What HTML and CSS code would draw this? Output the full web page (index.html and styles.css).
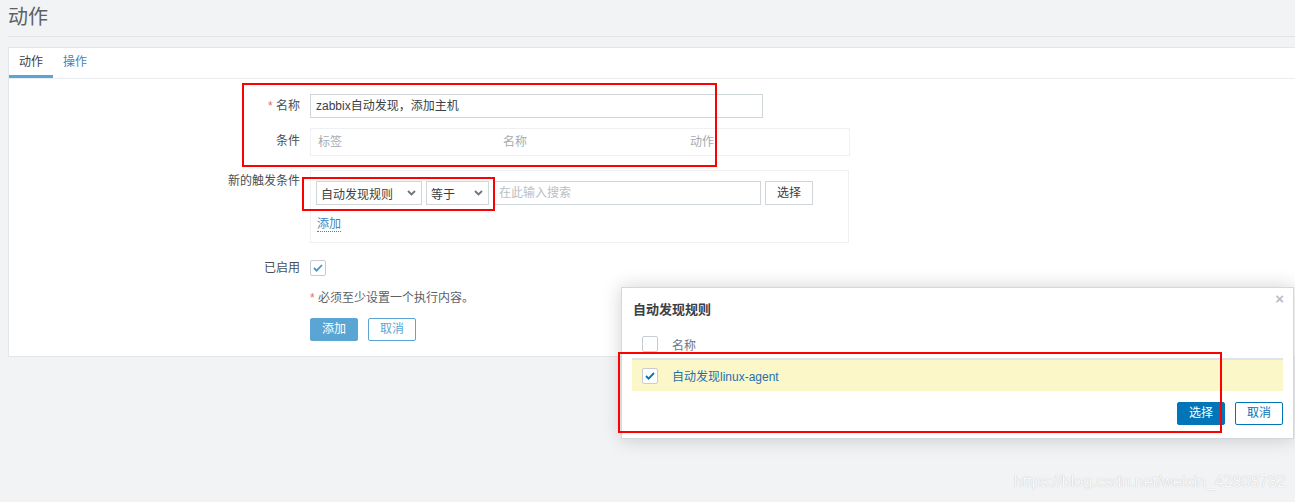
FILE: index.html
```html
<!DOCTYPE html>
<html lang="zh-CN">
<head>
  <meta charset="UTF-8">
  <title>动作</title>
  <link rel="stylesheet" href="styles.css">
</head>
<body>

  <header class="page-title">
    <h1>动作</h1>
  </header>

  <div class="card">
    <ul class="tabs">
      <li class="active">动作</li>
      <li>操作</li>
    </ul>

    <div class="form">
      <div class="row row-name">
        <div class="lbl"><span class="star">*</span> 名称</div>
        <div class="fld"><div class="text-input wide">zabbix自动发现，添加主机</div></div>
      </div>

      <div class="row row-cond">
        <div class="lbl lbl-cond">条件</div>
        <div class="fld">
          <div class="cond-table">
            <span class="col col-tag">标签</span>
            <span class="col col-name">名称</span>
            <span class="col">动作</span>
          </div>
        </div>
      </div>

      <div class="row row-new">
        <div class="lbl lbl-top">新的触发条件</div>
        <div class="fld">
          <div class="new-box">
            <div class="inline">
              <div class="select sel-type">自动发现规则
                <svg width="9" height="6" viewBox="0 0 9 6"><path d="M1 1l3.5 3.5L8 1" fill="none" stroke="#6d767c" stroke-width="1.8"/></svg>
              </div>
              <div class="select sel-op">等于
                <svg width="9" height="6" viewBox="0 0 9 6"><path d="M1 1l3.5 3.5L8 1" fill="none" stroke="#6d767c" stroke-width="1.8"/></svg>
              </div>
              <div class="text-input search">在此输入搜索</div>
              <div class="btn-grey">选择</div>
            </div>
            <a class="dotted-link">添加</a>
          </div>
        </div>
      </div>

      <div class="row row-enabled">
        <div class="lbl">已启用</div>
        <div class="fld">
          <span class="checkbox">
            <svg width="10" height="8" viewBox="0 0 10 8"><path d="M1 4l2.6 2.6L9 1" fill="none" stroke="#4796c4" stroke-width="1.8"/></svg>
          </span>
        </div>
      </div>

      <div class="row row-note">
        <div class="lbl"></div>
        <div class="fld note"><span class="star">*</span> 必须至少设置一个执行内容。</div>
      </div>

      <div class="row row-buttons">
        <div class="lbl"></div>
        <div class="fld buttons">
          <span class="btn-main">添加</span>
          <span class="btn-alt">取消</span>
        </div>
      </div>
    </div>
  </div>

  <div class="modal">
    <div class="modal-head">
      <h3>自动发现规则</h3>
      <span class="close">×</span>
    </div>
    <div class="list">
      <div class="list-head">
        <span class="checkbox"></span>
        <span class="list-title">名称</span>
      </div>
      <div class="list-row">
        <span class="checkbox">
          <svg width="10" height="8" viewBox="0 0 10 8"><path d="M1 4l2.6 2.6L9 1" fill="none" stroke="#0275b8" stroke-width="1.9"/></svg>
        </span>
        <a class="list-link">自动发现linux-agent</a>
      </div>
    </div>
    <div class="modal-foot">
      <span class="btn-select">选择</span>
      <span class="btn-cancel">取消</span>
    </div>
  </div>

  <!-- red annotation frames drawn over the screenshot -->
  <div class="mark mark-1"></div>
  <div class="mark mark-2"></div>
  <div class="mark mark-3"></div>

  <div class="watermark">https://blog.csdn.net/weixin_42808782</div>

</body>
</html>
```

FILE: styles.css
```css
body {
  margin: 0;
  background: #f2f3f5;
  font-family: "Liberation Sans", Arial, "Noto Sans CJK SC", sans-serif;
  font-size: 12px;
  color: #4a4f53;
  width: 1295px;
  height: 502px;
  overflow: hidden;
  position: relative;
}

.page-title {
  margin-left: 8px;
  height: 36px;
  border-bottom: 1px solid #e2e5e8;
}

.page-title h1 {
  margin: 0;
  font-size: 20px;
  font-weight: normal;
  line-height: 34px;
  color: #5c6165;
}

.card {
  margin: 10px 0 0 8px;
  background: #fff;
  border: 1px solid #e4e7ea;
  border-right: none;
  height: 308px;
}

.tabs {
  list-style: none;
  margin: 0;
  padding: 0;
  display: flex;
  height: 30px;
  border-bottom: 1px solid #ebeef0;
}

.tabs li {
  padding: 0 10px;
  line-height: 29px;
  color: #3d86bd;
}

.tabs li.active {
  color: #3b4045;
  border-bottom: 3px solid #5aa5d4;
}

.form {
  padding-top: 15px;
}

.row {
  display: flex;
}

.lbl {
  width: 291px;
  flex-shrink: 0;
  text-align: right;
  color: #4a4f53;
  line-height: 24px;
}

.fld {
  margin-left: 10px;
}

.star {
  color: #e56b6b;
}

.text-input {
  height: 22px;
  line-height: 22px;
  border: 1px solid #cfd7db;
  padding: 0 5px;
  color: #3b4045;
  box-sizing: content-box;
}

.wide {
  width: 441px;
}

.row-cond {
  margin-top: 10px;
}

.lbl-cond {
  line-height: 26px;
}

.cond-table {
  width: 531px;
  height: 26px;
  line-height: 26px;
  border: 1px solid #eef0f2;
  padding-left: 7px;
  display: flex;
  color: #a4acb2;
}

.col-tag {
  width: 185px;
}

.col-name {
  width: 187px;
}

.row-new {
  margin-top: 14px;
}

.lbl-top {
  line-height: 22px;
}

.new-box {
  width: 532px;
  height: 51px;
  border: 1px solid #eef0f2;
  padding: 10px 0 10px 5px;
}

.inline {
  display: flex;
  gap: 4px;
  height: 24px;
}

.select {
  display: flex;
  align-items: center;
  justify-content: space-between;
  border: 1px solid #cfd7db;
  padding: 0 5px 0 4px;
  color: #3b4045;
  height: 22px;
}

.sel-type {
  width: 95px;
}

.sel-op {
  width: 52px;
}

.search {
  width: 256px;
  color: #b9c0c5;
}

.btn-grey {
  width: 46px;
  height: 22px;
  line-height: 22px;
  text-align: center;
  border: 1px solid #cfd7db;
  color: #3b4045;
}

.dotted-link {
  display: inline-block;
  margin: 12px 0 0 1px;
  color: #3d86bd;
  line-height: 14px;
  border-bottom: 1px dotted #3d86bd;
}

.row-enabled {
  margin-top: 17px;
  height: 16px;
}

.row-enabled .lbl {
  line-height: 16px;
}

.checkbox {
  display: inline-flex;
  align-items: center;
  justify-content: center;
  width: 14px;
  height: 14px;
  border: 1px solid #c5cdd3;
  border-radius: 2px;
  background: #fff;
}

.row-note {
  margin-top: 15px;
}

.note {
  line-height: 14px;
  color: #5b6166;
}

.row-buttons {
  margin-top: 13px;
}

.buttons {
  display: flex;
  gap: 10px;
}

.btn-main,
.btn-alt {
  width: 46px;
  height: 21px;
  line-height: 21px;
  text-align: center;
  border: 1px solid #5aa5d4;
  border-radius: 2px;
}

.btn-main {
  background: #5aa5d4;
  color: #fff;
}

.btn-alt {
  color: #5aa5d4;
  background: #fff;
}

.modal {
  position: absolute;
  left: 621px;
  top: 287px;
  width: 651px;
  height: 140px;
  padding: 0 10px 10px 10px;
  background: #fff;
  border: 1px solid #d3d8dc;
  box-shadow: 0 0 18px rgba(0, 0, 0, 0.18);
}

.modal-head {
  display: flex;
  justify-content: space-between;
  height: 42px;
}

.modal-head h3 {
  margin: 0;
  padding: 11px 0 0 1px;
  font-size: 13px;
  font-weight: bold;
  color: #3b4045;
}

.close {
  margin: 2px -1px 0 0;
  font-size: 15px;
  font-weight: bold;
  color: #b7bec3;
}

.list-head,
.list-row {
  display: flex;
  align-items: center;
  padding-left: 10px;
  gap: 14px;
}

.list-head {
  height: 28px;
  border-bottom: 2px solid #dfe4e7;
}

.list-title {
  color: #6d767c;
}

.list-row {
  height: 31px;
  background: #fbf7c8;
}

.list-link {
  color: #1f6fb0;
}

.modal-foot {
  display: flex;
  justify-content: flex-end;
  gap: 10px;
  margin-top: 11px;
}

.btn-select,
.btn-cancel {
  width: 46px;
  height: 21px;
  line-height: 21px;
  text-align: center;
  border: 1px solid #0275b8;
  border-radius: 2px;
}

.btn-select {
  background: #0275b8;
  color: #fff;
}

.btn-cancel {
  color: #0275b8;
  background: #fff;
}

.mark {
  position: absolute;
  border: 2px solid #f00;
}

.mark-1 {
  left: 242px;
  top: 83px;
  width: 471px;
  height: 80px;
}

.mark-2 {
  left: 302px;
  top: 177px;
  width: 189px;
  height: 30px;
}

.mark-3 {
  left: 618px;
  top: 352px;
  width: 600px;
  height: 77px;
}

.watermark {
  position: absolute;
  right: 9px;
  top: 473px;
  font-size: 16px;
  color: #fafafa;
  text-shadow: 0 0 1px rgba(0, 0, 0, 0.25);
}
```
